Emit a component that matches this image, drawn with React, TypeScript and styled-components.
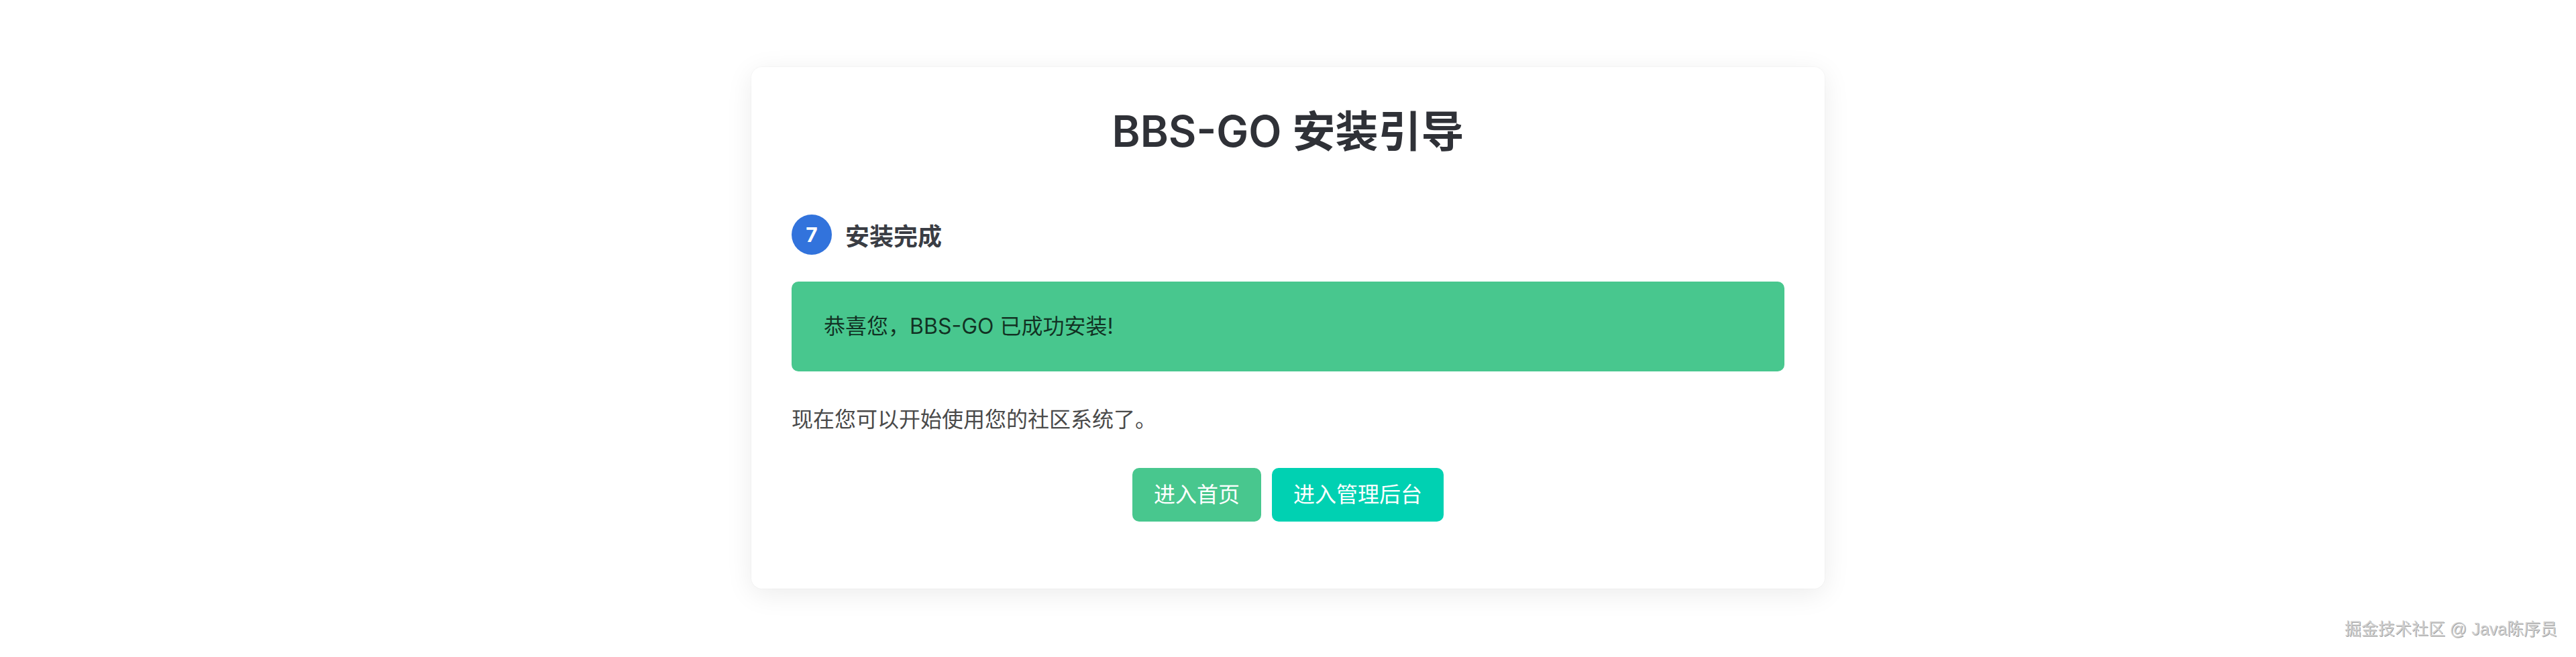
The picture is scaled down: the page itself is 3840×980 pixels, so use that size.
import React from "react";
import styled, { createGlobalStyle } from "styled-components";

const GlobalStyle = createGlobalStyle`
  html, body {
    margin: 0;
    padding: 0;
    background: #ffffff;
  }
  body {
    font-family: Inter, "Noto Sans CJK SC", "Noto Sans", sans-serif;
    color: #4a4a4a;
  }
  * { box-sizing: border-box; }
`;

const Page = styled.div`
  position: relative;
  width: 3840px;
  height: 980px;
  padding-top: 100px;
  display: flex;
  justify-content: center;
  align-items: flex-start;
`;

const Card = styled.div`
  width: 1600px;
  background: #ffffff;
  border-radius: 16px;
  box-shadow: 0 8px 40px rgba(10, 10, 10, 0.08), 0 0 0 1px rgba(10, 10, 10, 0.02);
  padding: 60px 60px 100px;
  display: flex;
  flex-direction: column;
`;

const Title = styled.h1`
  margin: 0 0 88px;
  font-size: 64px;
  line-height: 72px;
  font-weight: 600;
  color: #2f3137;
  text-align: center;
`;

const StepRow = styled.div`
  display: flex;
  align-items: center;
  gap: 20px;
  height: 60px;
`;

const StepBadge = styled.span`
  width: 60px;
  height: 60px;
  border-radius: 50%;
  background: #3273dc;
  color: #ffffff;
  font-size: 30px;
  font-weight: 700;
  display: flex;
  align-items: center;
  justify-content: center;
`;

const StepLabel = styled.span`
  font-size: 36px;
  font-weight: 700;
  color: #3a3d44;
`;

const Notice = styled.div<{ $tone: string }>`
  margin-top: 40px;
  background: ${(p) => p.$tone};
  border-radius: 10px;
  padding: 43px 80px 43px 48px;
  font-size: 32px;
  line-height: 48px;
  color: rgba(0, 0, 0, 0.75);
`;

const Paragraph = styled.p`
  margin: 48px 0 0;
  font-size: 32px;
  line-height: 48px;
  color: #4a4a4a;
`;

const Buttons = styled.div`
  margin-top: 48px;
  display: flex;
  justify-content: center;
  gap: 16px;
`;

const Button = styled.a<{ $bg: string }>`
  height: 80px;
  padding: 0 32px;
  border-radius: 10px;
  background: ${(p) => p.$bg};
  color: #ffffff;
  font-size: 32px;
  line-height: 80px;
  text-decoration: none;
  cursor: pointer;
  display: inline-flex;
  align-items: center;
`;

const Watermark = styled.div`
  position: absolute;
  right: 28px;
  bottom: 26px;
  font-family: "Liberation Sans", "Noto Sans CJK SC", sans-serif;
  font-size: 25px;
  font-weight: 400;
  color: #d0d0d0;
  text-shadow: 1px 1px 0 rgba(80, 80, 80, 0.55), -1px -1px 0 rgba(255, 255, 255, 0.9);
  white-space: nowrap;
`;

export default function App() {
  return (
    <>
      <GlobalStyle />
      <Page>
        <Card>
          <Title>BBS-GO 安装引导</Title>
          <StepRow>
            <StepBadge>7</StepBadge>
            <StepLabel>安装完成</StepLabel>
          </StepRow>
          <Notice $tone="#48c78e">恭喜您，BBS-GO 已成功安装!</Notice>
          <Paragraph>现在您可以开始使用您的社区系统了。</Paragraph>
          <Buttons>
            <Button $bg="#48c78e">进入首页</Button>
            <Button $bg="#00d1b2">进入管理后台</Button>
          </Buttons>
        </Card>
        <Watermark>掘金技术社区 @ Java陈序员</Watermark>
      </Page>
    </>
  );
}
